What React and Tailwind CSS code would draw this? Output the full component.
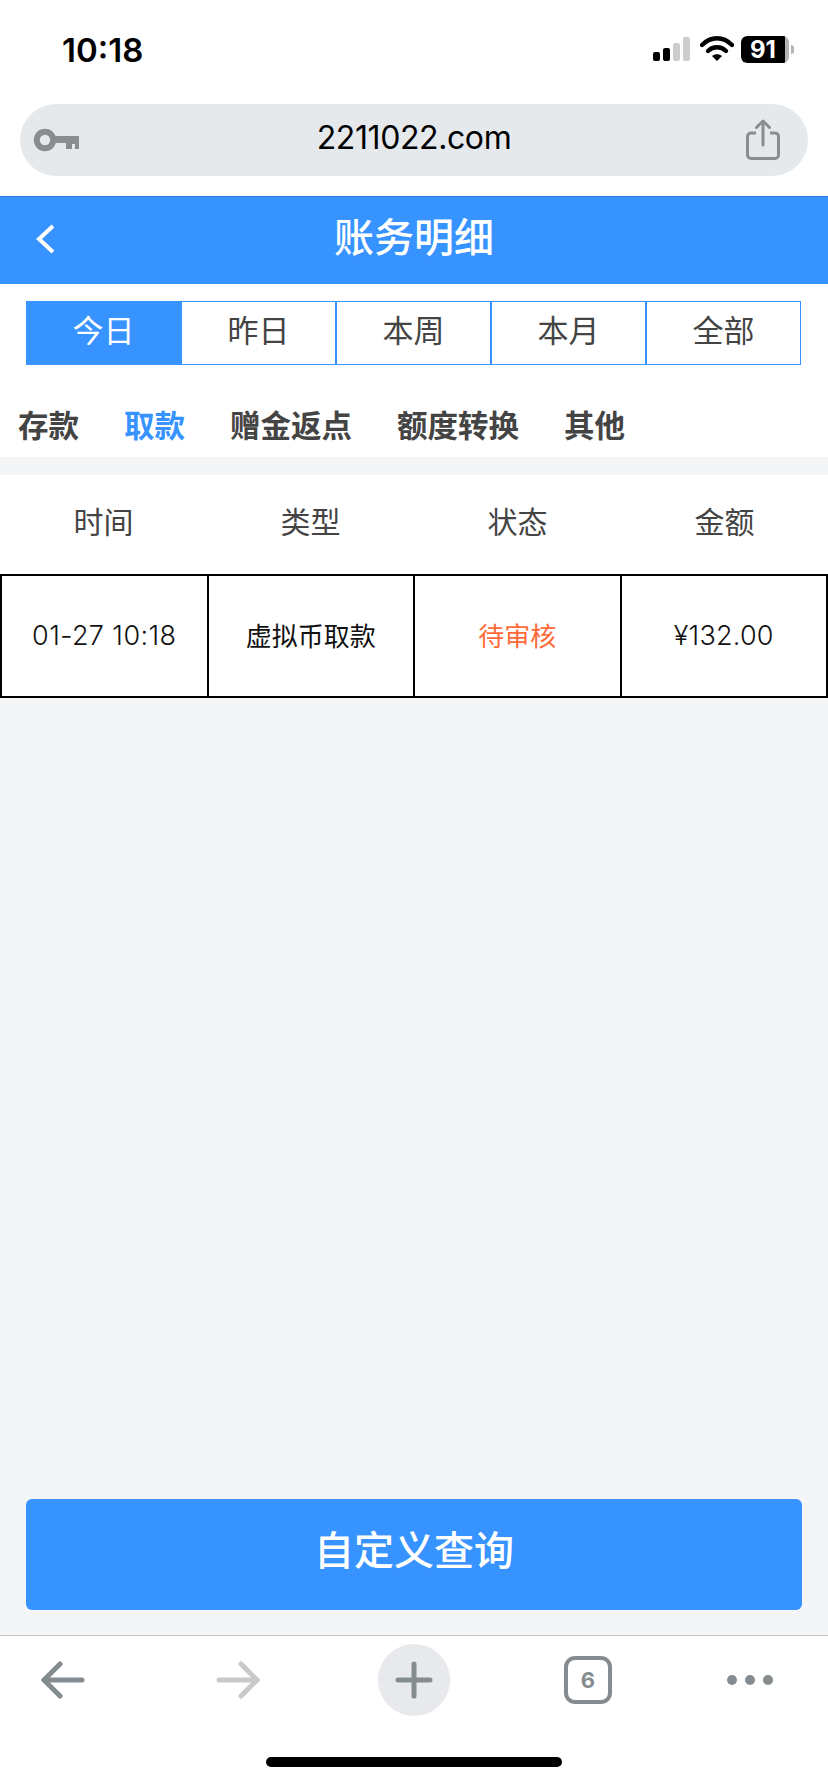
import { useState } from "react";

const cjk = { fontFamily: '"Noto Sans CJK SC", "Noto Sans", sans-serif' };

const ranges = ["今日", "昨日", "本周", "本月", "全部"];
const kinds = ["存款", "取款", "赠金返点", "额度转换", "其他"];
const heads = ["时间", "类型", "状态", "金额"];

const StatusIcons = () => (
    <div className="flex items-start">
        <svg width="40" height="26" viewBox="0 0 40 26" className="mr-[8px]">
            <rect x="1" y="16" width="7" height="9" rx="2" fill="#000" />
            <rect x="11" y="12" width="7" height="13" rx="2" fill="#000" />
            <rect x="21" y="7" width="7" height="18" rx="2" fill="#ccc" />
            <rect x="31" y="1" width="7" height="24" rx="2" fill="#ccc" />
        </svg>
        <svg width="34" height="26" viewBox="0 0 34 26" className="mr-[7px]">
            <path d="M2 9 C11 0 23 0 32 9" fill="none" stroke="#000" strokeWidth="4.4" strokeLinecap="round" />
            <path d="M8 15 C13 10 21 10 26 15" fill="none" stroke="#000" strokeWidth="4.4" strokeLinecap="round" />
            <path d="M12 20 C15 17.5 19 17.5 22 20 L17 25 Z" fill="#000" />
        </svg>
        <div className="w-[48px] h-[27px] rounded-[6px] bg-[#b5b5b5] overflow-hidden">
            <div className="w-[44px] h-full bg-black rounded-l-[6px] text-white text-[24px] font-bold leading-[27px] text-center font-['Inter',sans-serif]">
                91
            </div>
        </div>
        <div className="w-[3px] h-[9px] ml-[2px] mt-[9px] rounded-r-[3px] bg-[#b5b5b5]" />
    </div>
);

const KeyIcon = () => (
    <svg width="46" height="24" viewBox="0 0 46 24">
        <circle cx="12" cy="12" r="8.2" fill="none" stroke="#878d91" strokeWidth="6" />
        <path d="M21 8 H46 V21 H42 V16 H39 V21 H33 V15 H21 Z" fill="#878d91" />
    </svg>
);

const ShareIcon = () => (
    <svg width="34" height="42" viewBox="0 0 34 42" fill="none" stroke="#878d91" strokeWidth="3">
        <path d="M10 14 H5 a3.5 3.5 0 0 0 -3.5 3.5 V36 a3.5 3.5 0 0 0 3.5 3.5 H29 a3.5 3.5 0 0 0 3.5 -3.5 V17.5 a3.5 3.5 0 0 0 -3.5 -3.5 H24" />
        <path d="M17 26 V3" strokeLinecap="round" />
        <path d="M10.5 8.5 L17 2 L23.5 8.5" strokeLinecap="round" strokeLinejoin="round" />
    </svg>
);

const ArrowIcon = ({ color, flip }) => (
    <svg width="46" height="38" viewBox="0 0 46 38" fill="none" stroke={color} strokeWidth="5" strokeLinecap="round" strokeLinejoin="round" className={flip ? "-scale-x-100" : ""}>
        <path d="M41 19 H3" />
        <path d="M19 3 L3 19 L19 35" />
    </svg>
);

export default function App() {
    const [range, setRange] = useState(0);
    const [kind, setKind] = useState(1);

    return (
        <div className="w-[828px] h-[1792px] flex flex-col bg-[#f4f5f7] overflow-hidden" style={cjk}>
            {/* 手机状态栏和地址栏 */}
            <div className="bg-white">
                <div className="h-[104px] flex justify-between pl-[62px] pr-[34px] pt-[36px]">
                    <span className="text-[33px] leading-[28px] h-[28px] font-semibold text-black font-['Inter',sans-serif]">10:18</span>
                    <StatusIcons />
                </div>
                <div className="mx-[20px] mb-[20px] h-[72px] rounded-[36px] bg-[#e6e9ec] flex items-center pl-[13px] pr-[28px]">
                    <div className="w-[65px] flex"><KeyIcon /></div>
                    <span className="flex-1 text-center text-[32px] text-black font-['Inter',sans-serif] tracking-[-0.4px] pb-[4px]">2211022.com</span>
                    <div className="w-[50px] flex justify-end"><ShareIcon /></div>
                </div>
            </div>

            <header className="h-[88px] bg-[#3793ff] border-t border-[#2f7fe0] flex items-center pl-[34px] pb-[4px]">
                <svg width="22" height="32" viewBox="0 0 22 32" fill="none" stroke="#fff" strokeWidth="4">
                    <path d="M19 3 L5 16 L19 29" />
                </svg>
                <h1 className="flex-1 text-center text-white text-[40px] font-medium pr-[56px] pb-[7px]">账务明细</h1>
            </header>

            <div className="bg-white pt-[17px]">
                <div className="mx-[26px] h-[64px] flex">
                    {ranges.map((r, i) => (
                        <button
                            key={r}
                            onClick={() => setRange(i)}
                            className={`w-[155px] text-[31px] pb-[7px] border border-[#3793ff] ${range === i ? "bg-[#3793ff] text-white" : "bg-white text-[#444]"}`}
                        >
                            {r}
                        </button>
                    ))}
                </div>
                <div className="h-[92px] flex items-center gap-[45px] pl-[18px] pt-[28px]">
                    {kinds.map((k, i) => (
                        <button key={k} onClick={() => setKind(i)} className={`text-[30.5px] font-bold ${kind === i ? "text-[#3793ff]" : "text-[#444]"}`}>
                            {k}
                        </button>
                    ))}
                </div>
            </div>

            <div className="mt-[18px] bg-white h-[99px] grid grid-cols-4 items-center">
                {heads.map((h) => (
                    <div key={h} className="text-center text-[30px] text-[#444] pb-[9px]">{h}</div>
                ))}
            </div>
            <table className="w-full table-fixed border-collapse bg-white text-[26px] text-[#111]">
                <tbody>
                    <tr className="h-[122px]">
                        <td className="border-2 border-black text-center text-[27px] tracking-[0.4px] font-['Inter',sans-serif] font-light">01-27 10:18</td>
                        <td className="border-2 border-black text-center pb-[3px]">虚拟币取款</td>
                        <td className="border-2 border-black text-center pb-[3px] text-[#ff6a39]">待审核</td>
                        <td className="border-2 border-black text-center text-[27px] tracking-[0.2px] font-['Inter',sans-serif] font-light">¥132.00</td>
                    </tr>
                </tbody>
            </table>

            <div className="flex-1 flex flex-col justify-end px-[26px] pb-[25px]">
                <button className="h-[111px] rounded-[6px] bg-[#3793ff] text-white text-[40px] font-medium pb-[14px]">自定义查询</button>
            </div>

            {/* 浏览器底部工具栏 */}
            <footer className="h-[157px] bg-white border-t border-[#c6c6c6] flex flex-col">
                <div className="pt-[8px] h-[121px] flex pl-[41px] items-start">
                    <div className="h-[72px] flex items-center mr-[127px]"><ArrowIcon color="#858c8f" /></div>
                    <div className="h-[72px] flex items-center mr-[118px]"><ArrowIcon color="#c9c9c9" flip /></div>
                    <div className="w-[72px] h-[72px] mr-[114px] rounded-full bg-[#e8e9ec] flex items-center justify-center">
                        <svg width="38" height="38" viewBox="0 0 38 38" stroke="#858c8f" strokeWidth="5" strokeLinecap="round">
                            <path d="M19 3 V35 M3 19 H35" />
                        </svg>
                    </div>
                    <div className="h-[72px] flex items-center mr-[115px]">
                        <div className="w-[48px] h-[48px] shrink-0 rounded-[11px] border-[4px] border-[#858c8f] flex items-center justify-center text-[#858c8f] text-[22px] font-bold font-['Inter',sans-serif]">6</div>
                    </div>
                    <div className="h-[72px] flex items-center gap-[8px]">
                        <span className="w-[10px] h-[10px] rounded-full bg-[#858c8f]" />
                        <span className="w-[10px] h-[10px] rounded-full bg-[#858c8f]" />
                        <span className="w-[10px] h-[10px] rounded-full bg-[#858c8f]" />
                    </div>
                </div>
                <div className="mx-auto w-[296px] h-[10px] rounded-full bg-black" />
            </footer>
        </div>
    );
}
